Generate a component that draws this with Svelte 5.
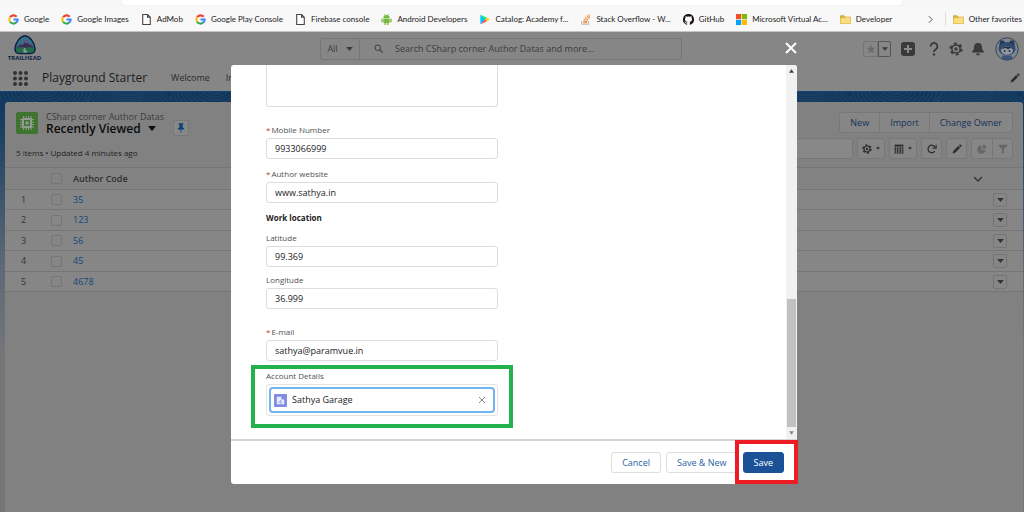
<script lang="ts">
  type Bookmark = { label: string; icon: string };

  const bookmarks: Bookmark[] = [
    { label: "Google", icon: "google" },
    { label: "Google Images", icon: "google" },
    { label: "AdMob", icon: "page" },
    { label: "Google Play Console", icon: "google" },
    { label: "Firebase console", icon: "page" },
    { label: "Android Developers", icon: "android" },
    { label: "Catalog: Academy f...", icon: "play" },
    { label: "Stack Overflow - W...", icon: "stack" },
    { label: "GitHub", icon: "github" },
    { label: "Microsoft Virtual Ac...", icon: "microsoft" },
    { label: "Developer", icon: "folder" },
  ];

  const rows = ["35", "123", "56", "45", "4678"];
  const arcs = Array.from({ length: 12 }, (_, i) => i);

  let mobile = $state("9933066999");
  let website = $state("www.sathya.in");
  let latitude = $state("99.369");
  let longitude = $state("36.999");
  let email = $state("sathya@paramvue.in");
  let account = $state("Sathya Garage");
</script>

{#snippet siteIcon(name: string)}
  <svg class="site-icon" viewBox="0 0 16 16" aria-hidden="true">
    {#if name === "google"}
      <g fill="none" stroke-width="3">
        <path d="M12.6 4A6 6 0 0 0 3 4.8" stroke="#ea4335" />
        <path d="M3 4.8a6 6 0 0 0 0 6.4" stroke="#fbbc05" />
        <path d="M3 11.2a6 6 0 0 0 9 1.3" stroke="#34a853" />
        <path d="M12 12.5A6 6 0 0 0 14 8H8" stroke="#4285f4" />
      </g>
    {:else if name === "page"}
      <path d="M2.5.8h7l4 4v10.4h-11z M9.5.8v4h4" fill="#fff" stroke="#444" stroke-width="1.6" />
    {:else if name === "android"}
      <g fill="#78b943">
        <path d="M3.4 6a4.6 4.6 0 0 1 9.2 0z M3.4 6.8h9.2v5.4a1 1 0 0 1-1 1H4.4a1 1 0 0 1-1-1z" />
        <path d="M.5 7h2v5h-2z M13.5 7h2v5h-2z M5 12h2v4H5z M9 12h2v4H9z" />
        <path d="M5 0l1.5 2.5M11 0L9.500 2.500" stroke="#78b943" />
      </g>
    {:else if name === "play"}
      <path d="M2 1v14l7-7z" fill="#00c3ff" />
      <path d="M2 1l7 7 2.500-2.500z" fill="#00e676" />
      <path d="M2 15l7-7 2.500 2.500z" fill="#ff3a44" />
      <path d="M11.500 5.500L9 8l2.500 2.500L15.500 8z" fill="#ffce00" />
    {:else if name === "stack"}
      <path d="M2.500 10v5h10v-5" fill="none" stroke="#bcbbbb" stroke-width="1.500" />
      <path
        d="M4.500 12.700h6M4.600 10.300l6 .7M5.300 7.500l5.500 1.900M7 4.500l4.800 3.500M9.800 2l3.300 4.800M12.800.5l1 5.500"
        fill="none"
        stroke="#f48024"
        stroke-width="1.400"
      />
    {:else if name === "github"}
      <path
        fill="#161514"
        fill-rule="evenodd"
        d="M8 0a8 8 0 0 0-2.500 15.600c.4.100.5-.2.500-.4v-1.500c-2.200.5-2.700-1-2.700-1-.4-.9-.9-1.200-.9-1.200-.7-.5.100-.5.100-.5.800.1 1.200.8 1.200.8.700 1.200 1.900.9 2.300.7.100-.5.300-.9.500-1.100C4.700 11.200 2.900 10.500 2.900 7.500c0-.9.300-1.600.8-2.200-.1-.2-.4-1 .1-2.100 0 0 .7-.2 2.200.8a7.600 7.600 0 0 1 4 0c1.500-1 2.200-.8 2.200-.8.500 1.100.2 1.900.1 2.100.5.600.8 1.300.8 2.200 0 3-1.900 3.700-3.600 3.900.3.200.5.700.5 1.500v2.300c0 .2.100.5.500.4A8 8 0 0 0 8 0z"
      />
    {:else if name === "microsoft"}
      <path d="M0 0h7.500v7.500H0z" fill="#f25022" />
      <path d="M8.500 0H16v7.500H8.500z" fill="#7fba00" />
      <path d="M0 8.500h7.500V16H0z" fill="#00a4ef" />
      <path d="M8.500 8.500H16V16H8.500z" fill="#ffb900" />
    {:else}
      <path d="M.6 2.600h5.500l1.500 2h7.800v9.300H.6z" fill="#e5b73b" stroke="#c4952a" />
      <path d="M.8 6.200h6l1.500-1h7v8.500H.8z" fill="#fbdf7f" />
    {/if}
  </svg>
{/snippet}

{#snippet gear()}
  <svg class="glyph" viewBox="0 0 16 16" aria-hidden="true">
    <circle cx="8" cy="8" r="6.300" fill="none" stroke="currentColor" stroke-width="2.500" stroke-dasharray="3.300 3.297" />
    <circle cx="8" cy="8" r="4.700" fill="none" stroke="currentColor" stroke-width="1.700" />
    <circle cx="8" cy="8" r="1.900" fill="currentColor" />
  </svg>
{/snippet}

{#snippet pencil()}
  <svg class="glyph" viewBox="0 0 16 16" fill="currentColor" aria-hidden="true">
    <path d="M1 15l1-4 8-8 3 3-8 8z M11 2l1-1q1-.8 2 0l1 1q.8 1 0 2l-1 1z" />
  </svg>
{/snippet}

{#snippet caret()}
  <svg class="caret" viewBox="0 0 10 6" fill="currentColor" aria-hidden="true"><path d="M0 0h10L5 6z" /></svg>
{/snippet}

<div class="window">
  <div class="address-row"><div class="address"></div></div>
  <nav class="bookmarks" aria-label="Bookmarks">
    {#each bookmarks as bookmark}
      <a href="#top">{@render siteIcon(bookmark.icon)}{bookmark.label}</a>
    {/each}
    <button class="more" type="button" aria-label="More bookmarks">
      <svg viewBox="0 0 6 10"><path d="M1 1l4 4-4 4" fill="none" stroke="#333" /></svg>
    </button>
    <a class="other" href="#top">{@render siteIcon("folder")}Other favorites</a>
  </nav>

  <div class="app">
    <header class="global-header">
      <a class="logo" href="#top">
        <svg viewBox="0 0 44 40" aria-hidden="true">
          <path d="M22 1.500C32 3 41 15 42 27c.4 7-3 10-9 10H11c-6 0-9.400-3-9-10C3 15 12 3 22 1.500z" fill="#397087" stroke="#0b2344" stroke-width="3" />
          <path d="M5 26l8-9 4 4 7-12 7 11 3-3 5 9z" fill="#3a2b54" />
          <path d="M24 9l-4 8 4-2 3 3 1-3z M13 17l-3 4 4-1z M34 17l-2 3 4 2z" fill="#6e5888" />
          <path d="M4 27q9-5 18-1 9-4 18 1 1 8-7 8H11q-8 0-7-8z" fill="#216b46" />
          <path d="M19 25q8 2 2 5 8 1 5 5h-8q3-3-1-5 5-2 2-5z" fill="#8c9b8d" />
        </svg>
        <span>TRAILHEAD</span>
      </a>
      <div class="search">
        <button type="button" class="scope">All {@render caret()}</button>
        <svg class="lens" viewBox="0 0 12 12" aria-hidden="true">
          <circle cx="5" cy="5" r="3.700" fill="none" stroke="currentColor" stroke-width="1.300" />
          <path d="M8 8l3.500 3.500" stroke="currentColor" stroke-width="1.500" />
        </svg>
        <input type="search" aria-label="Search" placeholder="Search CSharp corner Author Datas and more..." />
      </div>
      <div class="tools">
        <div class="favorites">
          <button type="button" aria-label="Favorite">
            <svg class="glyph" viewBox="0 0 16 16" fill="#6b6b6b"><path d="M8 1l2 5h5l-4 3.500L12.500 15 8 11.800 3.500 15 5 9.500 1 6h5z" /></svg>
          </button>
          <button type="button" aria-label="Favorites list">{@render caret()}</button>
        </div>
        <button class="plain add" type="button" aria-label="Global actions">
          <svg viewBox="0 0 14 14"><rect width="14" height="14" rx="3" fill="#393939" /><path d="M7 3v8M3 7h8" stroke="#8a8a8a" stroke-width="2" /></svg>
        </button>
        <button class="plain" type="button" aria-label="Help">
          <svg viewBox="0 0 14 14"><path d="M3.600 4.500a3.400 3.400 0 1 1 5.300 2.700Q7 8.400 7 10" fill="none" stroke="#393939" stroke-width="1.800" /><circle cx="7" cy="12.500" r="1.200" fill="#393939" /></svg>
        </button>
        <button class="plain" type="button" aria-label="Setup">{@render gear()}</button>
        <button class="plain" type="button" aria-label="Notifications">
          <svg viewBox="0 0 14 14" fill="#393939"><path d="M7 1c3 0 4 2 4 4.500 0 2 .5 2.600 1.500 3.500.8 1 .5 1.500-.5 1.500H2c-1 0-1.300-.5-.5-1.500C2.500 8.100 3 7.500 3 5.500 3 3 4 1 7 1z M5 11.500h4q-.4 2-2 2t-2-2z" /></svg>
        </button>
        <button class="avatar" type="button" aria-label="View profile">
          <svg viewBox="0 0 24 24">
            <circle cx="12" cy="12" r="11.200" fill="#7d8790" stroke="#3c4654" />
            <path d="M5 3.500h3.500l1.500 2h4l1.500-2H19l1 7H4z" fill="#253a59" />
            <ellipse cx="12" cy="12" rx="8.500" ry="6.500" fill="#304a6f" />
            <ellipse cx="12" cy="13.500" rx="6" ry="4.200" fill="#92989e" />
            <path d="M6 12q2-3 6-2.500 4-.5 6 2.500l-3-1-2 1.500-2-1.500z" fill="#20324e" />
            <circle cx="9.500" cy="14" r=".9" fill="#1c2a3d" /><circle cx="14.500" cy="14" r=".9" fill="#1c2a3d" />
            <path d="M7.500 18.500h9l1 3.500q-5.500 2-11 0z" fill="#3c5577" />
          </svg>
        </button>
      </div>
    </header>

    <nav class="app-nav">
      <button class="waffle" type="button" aria-label="App launcher">
        <svg viewBox="0 0 15 15" fill="#333">
          {#each [2, 7.5, 13] as cy}
            {#each [2, 7.5, 13] as cx}<circle {cx} {cy} r="2" />{/each}
          {/each}
        </svg>
      </button>
      <span class="app-name">Playground Starter</span>
      <a href="#top">Welcome</a>
      <a href="#top">Import Data</a>
      <button class="edit-nav" type="button" aria-label="Edit navigation">{@render pencil()}</button>
    </nav>

    <main class="stage">
      <svg class="contours" aria-hidden="true">
        <defs>
          <pattern id="contours" width="170" height="10" patternUnits="userSpaceOnUse">
            <g fill="none" stroke="#2b5172" stroke-width=".5">
              {#each arcs as i}
                <ellipse cx="45" cy="-6" rx={3 + i * 4} ry={2 + i * 3} />
                <ellipse cx="128" cy="17" rx={2 + i * 4} ry={2 + i * 2} />
              {/each}
            </g>
          </pattern>
        </defs>
        <rect width="100%" height="10" fill="url(#contours)" />
      </svg>

      <section class="panel">
        <div class="panel-head">
          <div class="title-row">
            <svg class="object-icon" viewBox="0 0 22 22" aria-hidden="true">
              <rect width="22" height="22" rx="2" fill="#3f7430" />
              <path d="M7.500 4v14M10 4v14M12.500 4v14M15 4v14M4 7.500h14M4 10h14M4 12.500h14M4 15h14" stroke="#929b90" />
              <rect x="6" y="6" width="10" height="10" rx="1" fill="#929b90" />
              <rect x="8" y="8" width="6" height="6" fill="#3f7430" />
              <rect x="9.500" y="9.500" width="3" height="3" fill="#929b90" />
            </svg>
            <div class="titles">
              <p>CSharp corner Author Datas</p>
              <h1>Recently Viewed {@render caret()}</h1>
            </div>
            <button class="pin" type="button" aria-label="Pin list">
              <svg viewBox="0 0 10 12" fill="#0b3f78"><path d="M2 0h6v1L7 2v3l2 1.500V8H5.500v4h-1V8H1V6.500L3 5V2L2 1z" /></svg>
            </button>
            <div class="group actions">
              <button type="button">New</button>
              <button type="button">Import</button>
              <button type="button">Change Owner</button>
            </div>
          </div>
          <div class="list-row">
            <p>5 items • Updated 4 minutes ago</p>
            <input type="search" aria-label="Search this list" />
            <button class="tool wide" type="button" aria-label="List view controls">{@render gear()}{@render caret()}</button>
            <button class="tool wide" type="button" aria-label="Display as">
              <svg class="glyph" viewBox="0 0 16 16" fill="none" stroke="currentColor"><path d="M1 2.500h14" stroke-width="3" /><path d="M2 4v11M6 4v11M10 4v11M14 4v11" stroke-width="1.500" /><path d="M1 7.500h14M1 11h14M1 14.500h14" /></svg>
              {@render caret()}
            </button>
            <button class="tool" type="button" aria-label="Refresh">
              <svg class="glyph" viewBox="0 0 16 16" fill="none" stroke="currentColor" stroke-width="2"><path d="M12.500 11.500A6 6 0 1 1 12.500 4.500" /><path d="M14.500 1v5.500H9" /></svg>
            </button>
            <button class="tool" type="button" aria-label="Edit list">{@render pencil()}</button>
            <div class="group faded">
              <button type="button" aria-label="Charts" disabled>
                <svg class="glyph" viewBox="0 0 16 16" fill="currentColor"><path d="M7 2.500V9h6.500A6.500 6.500 0 1 1 7 2.500z M9 1a6 6 0 0 1 6 6H9z" /></svg>
              </button>
              <button type="button" aria-label="Filters" disabled>
                <svg class="glyph" viewBox="0 0 16 16" fill="currentColor"><path d="M1 1h14v2L9.500 8.500V15h-3V8.500L1 3z" /></svg>
              </button>
            </div>
          </div>
        </div>

        <table>
          <thead>
            <tr>
              <th class="num"></th>
              <th class="check"><input type="checkbox" aria-label="Select all" /></th>
              <th>Author Code</th>
              <th class="sort"><svg viewBox="0 0 8 6" aria-hidden="true"><path d="M0 1l4 4 4-4" fill="none" stroke="#333" stroke-width="1.300" /></svg></th>
              <th class="menu"></th>
            </tr>
          </thead>
          <tbody>
            {#each rows as code, i}
              <tr>
                <td class="num">{i + 1}</td>
                <td class="check"><input type="checkbox" aria-label="Select {code}" /></td>
                <td><a href="#top">{code}</a></td>
                <td class="sort"></td>
                <td class="menu"><button type="button" aria-label="Actions for {code}">{@render caret()}</button></td>
              </tr>
            {/each}
          </tbody>
        </table>
      </section>
    </main>
  </div>

  <div class="overlay">
    <button class="close" type="button" aria-label="Close">
      <svg viewBox="0 0 12 12"><path d="M1 1l10 10M11 1L1 11" stroke="#fff" stroke-width="2" /></svg>
    </button>
    <div class="modal" role="dialog" aria-label="New author">
      <div class="modal-body">
        <form class="columns">
          <div class="fields">
            <textarea aria-label="Address"></textarea>
            <div class="field">
              <label for="mobile"><abbr>*</abbr>Mobile Number</label>
              <input id="mobile" bind:value={mobile} />
            </div>
            <div class="field">
              <label for="website"><abbr>*</abbr>Author website</label>
              <input id="website" bind:value={website} />
            </div>
            <div class="location" role="group" aria-labelledby="location">
              <span id="location">Work location</span>
              <div class="field">
                <label for="latitude">Latitude</label>
                <input id="latitude" bind:value={latitude} />
              </div>
              <div class="field">
                <label for="longitude">Longitude</label>
                <input id="longitude" bind:value={longitude} />
              </div>
            </div>
            <div class="field">
              <label for="email"><abbr>*</abbr>E-mail</label>
              <input id="email" bind:value={email} />
            </div>
            <div class="field marked">
              <label for="account">Account Details</label>
              <div class="lookup">
                <div class="pill">
                  <svg viewBox="0 0 14 14" aria-hidden="true">
                    <rect width="14" height="14" rx="1" fill="#7f8de1" />
                    <path d="M3 3h5v3h3v5H3z" fill="#e8ebfb" />
                    <path d="M7.500 6.500v4M5 8.500h2" stroke="#7f8de1" />
                  </svg>
                  <input id="account" bind:value={account} />
                  <button type="button" aria-label="Clear account" onclick={() => (account = "")}>
                    <svg viewBox="0 0 8 8"><path d="M1 1l6 6M7 1L1 7" stroke="#888" /></svg>
                  </button>
                </div>
              </div>
            </div>
          </div>
        </form>
        <div class="scrollbar" aria-hidden="true">
          <svg viewBox="0 0 6 4"><path d="M0 4l3-4 3 4z" fill="#444" /></svg>
          <div class="thumb"></div>
          <svg viewBox="0 0 6 4"><path d="M0 0l3 4 3-4z" fill="#8a8a8a" /></svg>
        </div>
      </div>
      <footer>
        <button type="button">Cancel</button>
        <button type="button">Save &amp; New</button>
        <button class="save" type="button">Save</button>
      </footer>
    </div>
  </div>
</div>

<style>
  :global(body) {
    overflow: hidden;
  }

  .window {
    position: relative;
    min-height: 100vh;
    display: flex;
    flex-direction: column;
    font: 9px/14px "Open Sans", "Noto Sans", sans-serif;
    color: #222;
  }

  .window * {
    box-sizing: border-box;
  }

  button,
  input,
  textarea {
    font: inherit;
    color: inherit;
    margin: 0;
    padding: 0;
    background: none;
    border: 0;
    outline: 0;
  }

  button {
    display: inline-flex;
    align-items: center;
    justify-content: center;
  }

  a {
    color: inherit;
    text-decoration: none;
  }

  p,
  h1 {
    margin: 0;
  }

  svg {
    display: block;
    flex-shrink: 0;
  }

  .glyph {
    width: 10px;
    height: 10px;
  }

  .caret {
    width: 7px;
    height: 4px;
  }

  .address-row {
    height: 7px;
    padding: 0 122px 2px 123px;
    background: #f6f6f6;
  }

  .address {
    height: 5px;
    background: #fff;
    border-radius: 0 0 3px 3px;
  }

  .bookmarks {
    display: flex;
    align-items: center;
    gap: 12px;
    height: 25px;
    padding: 0 2px 0 8px;
    background: #f8f8f8;
    border-bottom: 1px solid #c4c4c4;
    font-family: Lato, "Open Sans", sans-serif;
    font-size: 8px;
    white-space: nowrap;
  }

  .bookmarks a {
    display: flex;
    align-items: center;
    gap: 5px;
  }

  .site-icon {
    width: 11px;
    height: 11px;
  }

  .more {
    margin-left: auto;
  }

  .more svg {
    width: 5px;
    height: 9px;
  }

  .bookmarks .other {
    padding-left: 7px;
    border-left: 1px solid #ddd;
  }

  .app {
    flex: 1;
    display: flex;
    flex-direction: column;
    background: #868686;
  }

  .global-header {
    display: flex;
    align-items: center;
    height: 33px;
    padding: 0 5px 0 7px;
  }

  .logo {
    display: flex;
    flex-direction: column;
    align-items: center;
    width: 35px;
    color: #0b2344;
    font-size: 6px;
    font-weight: 700;
    line-height: 7px;
  }

  .logo svg {
    width: 22px;
    height: 20px;
  }

  .search {
    display: flex;
    align-items: center;
    flex: 1;
    height: 22px;
    margin: 0 181px 0 278px;
    border: 1px solid #757575;
    border-radius: 3px;
    color: #3c3c3c;
  }

  .scope {
    gap: 8px;
    width: 39px;
    height: 100%;
    border-right: 1px solid #757575;
  }

  .lens {
    width: 9px;
    height: 9px;
    margin: 0 12px 0 14px;
  }

  .search input {
    flex: 1;
  }

  .search input::placeholder {
    color: #3c3c3c;
    opacity: 1;
  }

  .tools {
    display: flex;
    align-items: center;
    gap: 8px;
    color: #393939;
  }

  .favorites {
    display: flex;
    margin-right: 2px;
  }

  .favorites button {
    width: 15px;
    height: 16px;
    border: 1px solid #747474;
    border-radius: 2px 0 0 2px;
  }

  .favorites button + button {
    width: 13px;
    border-color: #555;
    border-radius: 0 2px 2px 0;
  }

  .favorites .caret {
    width: 6px;
  }

  .plain svg {
    width: 14px;
    height: 14px;
  }

  .add {
    margin-right: 4px;
  }

  .avatar {
    margin-left: 2px;
  }

  .avatar svg {
    width: 24px;
    height: 24px;
  }

  .app-nav {
    display: flex;
    align-items: center;
    height: 26px;
    padding: 0 4px 0 13px;
    color: #2c2c2c;
  }

  .waffle svg {
    width: 15px;
    height: 15px;
  }

  .app-name {
    margin: 0 24px 0 14px;
    font-size: 12px;
    color: #1c1c1c;
  }

  .app-nav a + a {
    margin-left: 16px;
  }

  .edit-nav {
    margin-left: auto;
  }

  .stage {
    position: relative;
    flex: 1;
    display: flex;
    flex-direction: column;
    padding: 10px 1px 0 5px;
    background: linear-gradient(#0f3659 0, #133b60 20px, #5d6876 170px, #737679 260px);
    border-top: 1px solid #0a4478;
  }

  .contours {
    position: absolute;
    inset: 0 0 auto;
    width: 100%;
    height: 10px;
  }

  .panel {
    flex: 1;
    background: #818181;
    border-radius: 3px 3px 0 0;
  }

  .panel-head {
    display: flex;
    flex-direction: column;
    gap: 4px;
    padding: 10px 10px 8px 11px;
  }

  .title-row {
    display: flex;
    align-items: flex-start;
    height: 22px;
  }

  .object-icon {
    width: 22px;
    height: 22px;
  }

  .titles {
    margin-left: 8px;
    line-height: 10px;
  }

  .titles p {
    color: #3b3b3b;
  }

  h1 {
    display: flex;
    align-items: center;
    gap: 7px;
    font-size: 12px;
    line-height: 13px;
    font-weight: 600;
    color: #0b0b0b;
  }

  h1 .caret {
    width: 8px;
    height: 5px;
  }

  .pin {
    width: 16px;
    height: 16px;
    margin: 8px 0 0 9px;
    border: 1px solid #777;
    border-radius: 2px;
    background: #888;
  }

  .pin svg {
    width: 8px;
    height: 10px;
  }

  .group {
    display: flex;
    border: 1px solid #777;
    border-radius: 3px;
    background: #868686;
  }

  .group button + button {
    border-left: 1px solid #777;
  }

  .actions {
    height: 21px;
    margin-left: auto;
    color: #16325c;
  }

  .actions button {
    padding: 0 10px;
  }

  .list-row {
    display: flex;
    gap: 4px;
    height: 21px;
  }

  .list-row p {
    font-size: 8px;
    line-height: 30px;
    white-space: nowrap;
  }

  .list-row > input {
    flex: 0 1 140px;
    margin-left: auto;
    border: 1px solid #777;
    border-radius: 3px;
    background: #888;
  }

  .tool {
    width: 21px;
    border: 1px solid #777;
    border-radius: 3px;
    background: #868686;
    color: #2d2d2d;
  }

  .wide {
    gap: 4px;
    width: 28px;
  }

  .wide .caret {
    width: 4px;
    height: 3px;
  }

  .faded button {
    width: 20px;
    color: #686868;
  }

  table {
    width: 100%;
    border-collapse: collapse;
    table-layout: fixed;
    border-top: 1px solid #757575;
    background: #868686;
  }

  tr {
    height: 20px;
    border-bottom: 1px solid #757575;
  }

  thead tr {
    height: 22px;
    background: #838383;
  }

  tbody tr:nth-child(even) {
    height: 21px;
  }

  th,
  td {
    padding: 0;
    text-align: left;
    vertical-align: middle;
    line-height: 14px;
  }

  th {
    font-weight: 600;
    color: #2e2e2e;
  }

  td a {
    color: #11457c;
  }

  .num {
    width: 46px;
    padding-left: 16px;
    color: #333;
  }

  .check {
    width: 22px;
  }

  input[type="checkbox"] {
    appearance: none;
    display: block;
    width: 11px;
    height: 11px;
    border: 1px solid #757575;
    border-radius: 2px;
  }

  .sort {
    width: 19px;
  }

  .sort svg {
    width: 8px;
    height: 6px;
  }

  .menu {
    width: 30px;
  }

  .menu button {
    display: flex;
    width: 14px;
    height: 14px;
    border: 1px solid #757575;
    border-radius: 2px;
    color: #333;
  }

  .overlay {
    position: absolute;
    inset: 0;
    display: flex;
    flex-direction: column;
    padding: 42px 227px 28px 231px;
  }

  .close {
    align-self: flex-end;
    width: 12px;
    height: 12px;
    margin-bottom: 11px;
  }

  .close svg {
    width: 12px;
    height: 12px;
  }

  .modal {
    flex: 1;
    display: flex;
    flex-direction: column;
    background: #fff;
    border-radius: 3px;
  }

  .modal-body {
    flex: 1;
    display: flex;
    border-bottom: 2px solid #d4d4d4;
  }

  .columns {
    flex: 1;
    display: grid;
    grid-template-columns: 1fr 1fr;
    gap: 21px;
    padding: 0 35px;
  }

  .fields {
    display: flex;
    flex-direction: column;
    gap: 8px;
  }

  textarea {
    height: 42px;
    margin-bottom: 8px;
    border: 1px solid #ddd;
    border-top: 0;
    border-radius: 0 0 3px 3px;
    resize: none;
  }

  .field {
    display: flex;
    flex-direction: column;
    gap: 1px;
  }

  .field label {
    font-size: 8px;
    color: #505050;
  }

  .field abbr {
    margin-right: 1px;
    color: #c23934;
  }

  .field > input {
    height: 21px;
    padding: 0 8px;
    border: 1px solid #ddd;
    border-radius: 3px;
  }

  .location {
    display: flex;
    flex-direction: column;
    gap: 6px;
    margin-bottom: 8px;
  }

  .location > span {
    font-size: 8px;
    font-weight: 700;
  }

  .marked {
    position: relative;
  }

  .marked::after {
    content: "";
    position: absolute;
    inset: -4px -15px -12px;
    border: 4px solid #22b14c;
    pointer-events: none;
  }

  .lookup {
    padding: 2px;
    border: 1px solid #e4e4e4;
    border-radius: 3px;
  }

  .pill {
    display: flex;
    align-items: center;
    gap: 5px;
    height: 26px;
    padding: 0 7px 0 3px;
    border: 2px solid #70b4f0;
    border-radius: 4px;
  }

  .pill svg {
    width: 13px;
    height: 13px;
  }

  .pill input {
    flex: 1;
    min-width: 0;
  }

  .pill button svg {
    width: 8px;
    height: 8px;
  }

  .scrollbar {
    display: flex;
    flex-direction: column;
    align-items: center;
    gap: 4px;
    width: 11px;
    padding: 4px 0;
    background: #f1f1f1;
    border-radius: 0 3px 0 0;
  }

  .scrollbar svg {
    width: 5px;
    height: 4px;
  }

  .thumb {
    width: 9px;
    height: 35%;
    margin-top: auto;
    background: #c1c1c1;
  }

  footer {
    position: relative;
    display: flex;
    justify-content: flex-end;
    align-items: center;
    gap: 5px;
    height: 43px;
    padding-right: 13px;
  }

  footer::after {
    content: "";
    position: absolute;
    inset: -1px -1px 0 auto;
    box-sizing: border-box;
    width: 63px;
    border: 4px solid #ed1c24;
    pointer-events: none;
  }

  footer button {
    height: 21px;
    padding: 0 10px;
    border: 1px solid #ddd;
    border-radius: 3px;
    color: #2d5fa5;
  }

  footer .save {
    border-color: #1b5297;
    background: #1b5297;
    color: #fff;
  }
</style>
